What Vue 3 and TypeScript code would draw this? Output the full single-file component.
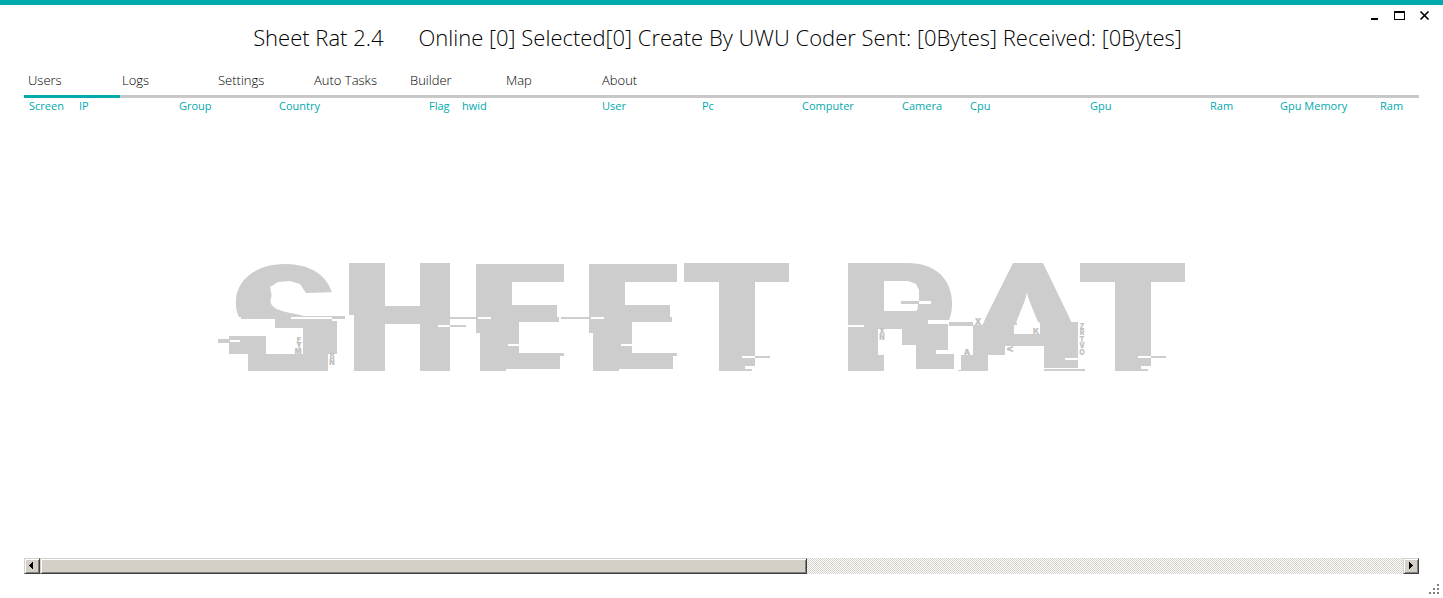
<script setup lang="ts">
import { ref } from 'vue'

type Box = [x: number, y: number, right: number, bottom: number]
interface Mark { ch: string; x: number; y: number; size?: number; turn?: number }

const tabs = ['Users', 'Logs', 'Settings', 'Auto Tasks', 'Builder', 'Map', 'About']
const active = ref('Users')

const columns: { label: string; width?: number }[] = [
  { label: 'Screen', width: 50 },
  { label: 'IP', width: 100 },
  { label: 'Group', width: 100 },
  { label: 'Country', width: 150 },
  { label: 'Flag', width: 33 },
  { label: 'hwid', width: 140 },
  { label: 'User', width: 100 },
  { label: 'Pc', width: 100 },
  { label: 'Computer', width: 100 },
  { label: 'Camera', width: 68 },
  { label: 'Cpu', width: 120 },
  { label: 'Gpu', width: 120 },
  { label: 'Ram', width: 70 },
  { label: 'Gpu Memory', width: 100 },
  { label: 'Ram' },
]

const letters: Mark[] = [
  { ch: 'S', x: 284, y: 388, size: 168 },
  { ch: 'H', x: 400, y: 371 },
  { ch: 'E', x: 520, y: 371 },
  { ch: 'E', x: 633, y: 371 },
  { ch: 'T', x: 737, y: 371 },
  { ch: 'R', x: 903, y: 383, size: 165 },
  { ch: 'A', x: 1028, y: 394, size: 180 },
  { ch: 'T', x: 1133, y: 371 },
]

const shift = (boxes: Box[], dx: number): Box[] =>
  boxes.map(([x, y, r, b]) => [x + dx, y, r + dx, b])

const eVoid: Box[] = [
  [470, 260, 476, 374], [564, 260, 572, 374], [512, 282, 572, 305], [557, 305, 572, 317],
  [559, 317, 572, 322], [519, 322, 572, 353], [470, 333, 480, 374], [560, 356, 572, 374],
  [506, 369, 572, 374], [470, 260, 572, 264],
]
const eInk: Box[] = [
  [476, 264, 512, 333], [480, 333, 519, 369], [480, 369, 506, 371], [476, 264, 564, 282],
  [505, 305, 557, 322], [505, 317, 559, 322], [505, 322, 519, 353], [505, 353, 564, 356], [505, 355, 560, 369],
]
const eCut: Box[] = [[478, 317, 491, 319], [508, 344, 519, 346]]

const tVoid: Box[] = [[680, 282, 719, 374], [755, 282, 796, 374], [680, 258, 796, 263]]
const tInk: Box[] = [[684, 263, 789, 282], [719, 282, 755, 371], [755, 356, 770, 358]]
const tCut: Box[] = [[742, 356, 755, 358], [745, 366, 755, 369], [752, 369, 755, 372]]

const voids: Box[] = [
  [225, 317, 346, 396],
  [340, 260, 349, 374], [385, 260, 420, 306], [385, 324, 420, 374], [450, 260, 460, 374], [340, 315, 354, 374],
  ...eVoid, ...shift(eVoid, 113), ...tVoid, ...shift(tVoid, 396),
  [840, 260, 848, 396], [848, 371, 960, 396], [864, 320, 968, 396],
  [950, 323, 1114, 396],
]
const wedges = [
  '270,287 278,282 290,281 300,284 306,293 340,292 340,317 323,317 300,308 282,303 272,298',
  '884,281 908,281 916,284 919,290 919,301 914,307 904,311 884,311',
  '970,258 1013,258 1013,263 983,323 970,323',
  '1043,258 1079,258 1079,323 1072,323 1043,263',
  '1027,295 1016,323 1040,323 1038,322',
]
const inks: Box[] = [
  [241, 316, 345, 319], [275, 319, 332, 328], [303, 321, 337, 354], [229, 336, 266, 354],
  [218, 339, 230, 343], [248, 354, 328, 371],
  [349, 263, 385, 315], [354, 315, 385, 371], [420, 263, 450, 371], [385, 306, 420, 324],
  [450, 317, 477, 319], [450, 325, 466, 327],
  ...eInk, ...shift(eInk, 113), [561, 317, 589, 319], ...tInk, ...shift(tInk, 396),
  [848, 263, 884, 329], [848, 329, 878, 355], [848, 355, 884, 371],
  [864, 311, 928, 329], [928, 324, 948, 329], [902, 329, 948, 345], [916, 345, 948, 350],
  [916, 350, 936, 354], [916, 354, 954, 369], [901, 301, 919, 304], [949, 322, 973, 326],
  [983, 323, 1017, 325], [973, 325, 1014, 346], [973, 346, 1005, 355], [961, 355, 988, 371], [958, 370, 988, 371],
  [1005, 334, 1044, 346], [1040, 322, 1078, 346], [1044, 346, 1078, 368], [1044, 369, 1085, 371],
]
const cuts: Box[] = [
  [291, 317, 332, 319], [230, 340, 240, 342], [438, 325, 450, 327],
  ...eCut, ...shift(eCut, 113), ...tCut, ...shift(tCut, 396),
  [848, 325, 864, 327], [919, 301, 931, 304], [1065, 358, 1078, 360],
]

const debris: Mark[] = [
  { ch: 'E', x: 299, y: 343 }, { ch: 'Y', x: 299, y: 348 }, { ch: 'M', x: 298, y: 354 },
  { ch: 'B', x: 332, y: 359 }, { ch: 'N', x: 332, y: 365 },
  { ch: 'X', x: 882, y: 334 }, { ch: 'N', x: 882, y: 340 },
  { ch: 'X', x: 978, y: 325, size: 9 }, { ch: 'A', x: 967, y: 355, size: 8 },
  { ch: 'V', x: 1007, y: 349, turn: 90, size: 8 }, { ch: 'K', x: 1036, y: 334, size: 8 },
  { ch: 'Z', x: 1082, y: 329 }, { ch: 'R', x: 1082, y: 335 }, { ch: 'T', x: 1082, y: 342 },
  { ch: 'V', x: 1082, y: 348 }, { ch: 'O', x: 1082, y: 355 },
]
</script>

<template>
  <div class="window">
    <header class="titlebar">
      <h1 class="title">
        <span>Sheet Rat 2.4</span>
        <span>Online [0] Selected[0] Create By UWU Coder Sent: [0Bytes] Received: [0Bytes]</span>
      </h1>
      <div class="controls">
        <button type="button" aria-label="Minimize">
          <svg width="25" height="20" shape-rendering="crispEdges"><rect x="9" y="13" width="7" height="2" /></svg>
        </button>
        <button type="button" aria-label="Maximize">
          <svg width="25" height="20" shape-rendering="crispEdges"><path d="M7 6h11v9H7zM8 8v6h9V8z" fill-rule="evenodd" /></svg>
        </button>
        <button type="button" aria-label="Close">
          <svg width="25" height="20"><path d="M8.5 6.5l8 8M16.5 6.5l-8 8" fill="none" stroke="#000" stroke-width="1.7" /></svg>
        </button>
      </div>
    </header>

    <nav class="tabs">
      <button
        v-for="tab in tabs"
        :key="tab"
        type="button"
        class="tab"
        :class="{ active: tab === active }"
        @click="active = tab"
      >{{ tab }}</button>
    </nav>

    <main class="panel">
      <table class="grid">
        <colgroup>
          <col v-for="(c, i) in columns" :key="i" :style="c.width ? { width: c.width + 'px' } : undefined">
        </colgroup>
        <thead>
          <tr><th v-for="(c, i) in columns" :key="i" scope="col">{{ c.label }}</th></tr>
        </thead>
      </table>

      <div class="canvas">
        <svg class="logo" viewBox="216 258 972 118" width="972" height="118" role="img" aria-label="Sheet Rat">
          <g class="letters">
            <text v-for="(l, i) in letters" :key="i" :x="l.x" :y="l.y" :font-size="l.size ?? 148">{{ l.ch }}</text>
          </g>
          <polygon v-for="w in wedges" :key="w" class="void" :points="w" />
          <g shape-rendering="crispEdges">
            <rect v-for="(b, i) in voids" :key="'v' + i" class="void" :x="b[0]" :y="b[1]" :width="b[2] - b[0]" :height="b[3] - b[1]" />
            <rect v-for="(b, i) in inks" :key="'i' + i" class="ink" :x="b[0]" :y="b[1]" :width="b[2] - b[0]" :height="b[3] - b[1]" />
            <rect v-for="(b, i) in cuts" :key="'c' + i" class="void" :x="b[0]" :y="b[1]" :width="b[2] - b[0]" :height="b[3] - b[1]" />
          </g>
          <g class="debris">
            <text
              v-for="(d, i) in debris"
              :key="i"
              :x="d.x"
              :y="d.y"
              :font-size="d.size ?? 7"
              :transform="d.turn ? `rotate(${d.turn} ${d.x} ${d.y})` : undefined"
            >{{ d.ch }}</text>
          </g>
        </svg>
      </div>

      <div class="scrollbar">
        <button type="button" class="raised arrow" aria-label="Scroll left">
          <svg width="12" height="12" shape-rendering="crispEdges"><path d="M6 2h1v7H6zM5 3h1v5H5zM4 4h1v3H4zM3 5h1v1H3z" /></svg>
        </button>
        <div class="track"><div class="raised thumb"></div></div>
        <button type="button" class="raised arrow" aria-label="Scroll right">
          <svg width="12" height="12" shape-rendering="crispEdges"><path d="M4 2h1v7H4zM5 3h1v5H5zM6 4h1v3H6zM7 5h1v1H7z" /></svg>
        </button>
      </div>
    </main>

    <footer class="status">
      <svg width="10" height="10" shape-rendering="crispEdges" aria-hidden="true">
        <path d="M8 0h2v2H8zM4 4h2v2H4zM8 4h2v2H8zM0 8h2v2H0zM4 8h2v2H4zM8 8h2v2H8z" fill="#808080" />
      </svg>
    </footer>
  </div>
</template>

<style>
body {
  margin: 0;
  background: #fff;
}
</style>

<style scoped>
.window {
  box-sizing: border-box;
  min-height: 100vh;
  display: flex;
  flex-direction: column;
  border-top: 5px solid #00aaad;
  background: #fff;
  color: #000;
  font-family: "Open Sans", "Noto Sans", sans-serif;
}
button {
  margin: 0;
  padding: 0;
  border: 0;
  background: none;
  color: inherit;
  font: inherit;
}
.titlebar {
  position: relative;
  display: flex;
  justify-content: center;
  height: 65px;
}
.title {
  display: flex;
  gap: 35px;
  margin: 0;
  padding: 16px 8px 0 0;
  font-size: 22px;
  line-height: 32px;
  font-weight: 300;
  white-space: nowrap;
}
.controls {
  position: absolute;
  top: 0;
  right: 6px;
  display: flex;
}
.controls svg,
.arrow svg {
  display: block;
}
.tabs {
  display: flex;
  margin: 0 24px;
  height: 28px;
  box-shadow: inset 0 -3px #c8c8c8;
}
.tab {
  width: 96px;
  padding: 0 0 8px 2px;
  text-align: left;
  font-size: 13px;
  line-height: 20px;
  font-weight: 300;
}
.tab.active {
  padding-left: 4px;
  box-shadow: inset 0 -3px #00aaad;
}
.panel {
  flex: 1;
  display: flex;
  flex-direction: column;
  margin: 0 24px;
}
.grid {
  width: 100%;
  table-layout: fixed;
  border-collapse: collapse;
}
.grid th {
  padding: 0 0 0 5px;
  text-align: left;
  font-size: 11px;
  line-height: 16px;
  font-weight: 400;
  color: #00aaad;
  white-space: nowrap;
}
.canvas {
  flex: 1;
  display: flex;
  align-items: center;
  justify-content: center;
  padding: 0 39px 38px 0;
}
.logo {
  max-width: 100%;
}
.letters {
  fill: #cdcdcd;
  font-family: Inter, sans-serif;
  font-weight: 900;
  text-anchor: middle;
}
.debris {
  fill: #c0c0c0;
  font-family: Inter, sans-serif;
  font-weight: 900;
  text-anchor: middle;
}
.ink {
  fill: #cdcdcd;
}
.void {
  fill: #fff;
}
.scrollbar {
  display: flex;
  height: 16px;
}
.raised {
  box-sizing: border-box;
  border: 1px solid;
  border-color: #d4d0c8 #404040 #404040 #d4d0c8;
  background: #d4d0c8;
  box-shadow: inset 1px 1px #fff, inset -1px -1px #808080;
}
.arrow {
  width: 16px;
  height: 16px;
  padding: 1px;
}
.track {
  flex: 1;
  background: repeating-conic-gradient(#fff 0 25%, #d4d0c8 0 50%) 0 0 / 2px 2px;
}
.thumb {
  width: 56.27%;
  height: 16px;
}
.status {
  display: flex;
  justify-content: flex-end;
  align-items: flex-end;
  height: 20px;
  padding: 0 4px 4px 0;
}
</style>
